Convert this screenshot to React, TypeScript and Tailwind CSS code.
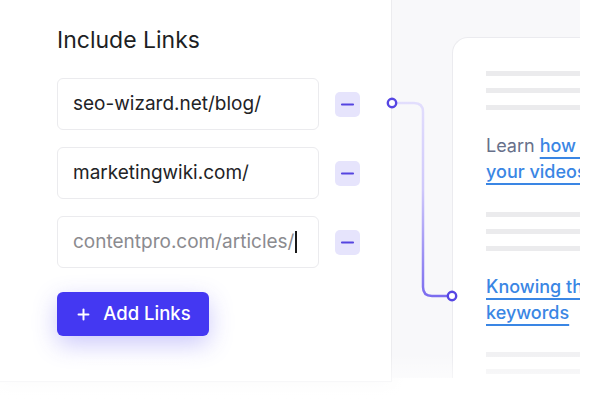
import { Minus, Plus } from 'lucide-react';

const links = [
  { url: 'seo-wizard.net/blog/', placeholder: false },
  { url: 'marketingwiki.com/', placeholder: false },
  { url: 'contentpro.com/articles/', placeholder: true },
];

function GrayLines({ faded = false }: { faded?: boolean }) {
  return (
    <div className="flex flex-col gap-[12px]">
      {[0, 1, 2].map((i) => (
        <div key={i} className={`h-[5px] w-[200px] ${faded ? 'bg-[#f1f1f3]' : 'bg-[#ebebed]'}`} />
      ))}
    </div>
  );
}

function Connector() {
  return (
    <svg
      className="absolute left-[384px] top-[95px]"
      width="76"
      height="210"
      viewBox="0 0 76 210"
      fill="none"
    >
      <defs>
        <linearGradient id="wire" x1="0" y1="0" x2="0" y2="210" gradientUnits="userSpaceOnUse">
          <stop offset="0" stopColor="#e4e0fd" />
          <stop offset="0.45" stopColor="#cfc8fb" />
          <stop offset="1" stopColor="#7565ee" />
        </linearGradient>
      </defs>
      <path
        d="M12.5 8 H30 Q39 8 39 17 V192 Q39 201 48 201 H63"
        stroke="url(#wire)"
        strokeWidth="2.5"
        strokeLinecap="round"
      />
      <circle cx="8" cy="8" r="4.2" fill="white" stroke="#5646e3" strokeWidth="2.4" />
      <circle cx="68" cy="201" r="4.2" fill="white" stroke="#5646e3" strokeWidth="2.4" />
    </svg>
  );
}

const link = 'font-medium text-[#3a86e4] underline decoration-[2px] underline-offset-[5px]';

export default function App() {
  return (
    <div className="relative flex h-[400px] w-[600px] overflow-hidden bg-white font-['Inter',sans-serif]">
      {/* Form card */}
      <div className="h-[382px] w-[392px] shrink-0 border-r border-b border-[#ececef] bg-white pl-[57px] pt-[26px] shadow-[0_6px_18px_rgba(20,20,40,0.04)]">
        <h1 className="text-[23px] leading-[28px] text-[#1d1f24]">Include Links</h1>

        <div className="mt-[24px] flex flex-col gap-[17px]">
          {links.map((item) => (
            <div key={item.url} className="flex items-center gap-[16px]">
              <div className="flex h-[52px] w-[262px] items-center rounded-[6px] border border-[#ebebee] bg-white px-[15px]">
                <span
                  className={`text-[19px] leading-[24px] ${
                    item.placeholder ? 'text-[#8b8b8f]' : 'text-[#222326]'
                  }`}
                >
                  {item.url}
                </span>
                {item.placeholder && <span className="ml-[1px] h-[22px] w-[1.5px] bg-[#1a1a1a]" />}
              </div>
              <button className="flex h-[25px] w-[25px] items-center justify-center rounded-[5px] bg-[#e6e4fc]">
                <Minus size={19} strokeWidth={2.6} className="text-[#5544e0]" />
              </button>
            </div>
          ))}
        </div>

        <button className="mt-[24px] flex h-[44px] w-[152px] items-center justify-center gap-[11px] rounded-[6px] bg-[#4438f2] text-[18.5px] font-medium text-white shadow-[0_8px_24px_rgba(68,56,242,0.28)]">
          <Plus size={17} strokeWidth={2.8} />
          Add Links
        </button>
      </div>

      {/* Preview area */}
      <div className="flex h-[378px] w-[188px] shrink-0 bg-[#f8f8fa]">
        <div className="w-[60px] shrink-0" />
        <div className="mt-[37px] flex-1 overflow-hidden rounded-tl-[16px] border-t border-l border-[#ebebef] bg-white pl-[33px] pt-[33px]">
          <GrayLines />
          <div className="mt-[23px] whitespace-nowrap text-[18px] leading-[26px]">
            <div>
              <span className="text-[#67708a]">Learn </span>
              <span className={link}>how to title</span>
            </div>
            <div className={link}>your videos for SEO</div>
          </div>
          <div className="mt-[27px]">
            <GrayLines />
          </div>
          <div className="mt-[23px] whitespace-nowrap text-[18px] leading-[26px]">
            <div className={link}>Knowing the right</div>
            <div>
              <span className={link}>keywords</span>
            </div>
          </div>
          <div className="mt-[26px]">
            <GrayLines faded />
          </div>
        </div>
      </div>

      <div className="flex-1 bg-white" />

      <Connector />

      {/* soft fade at the bottom */}
      <div className="pointer-events-none absolute bottom-0 left-0 h-[46px] w-full bg-gradient-to-b from-white/0 to-white" />
    </div>
  );
}
